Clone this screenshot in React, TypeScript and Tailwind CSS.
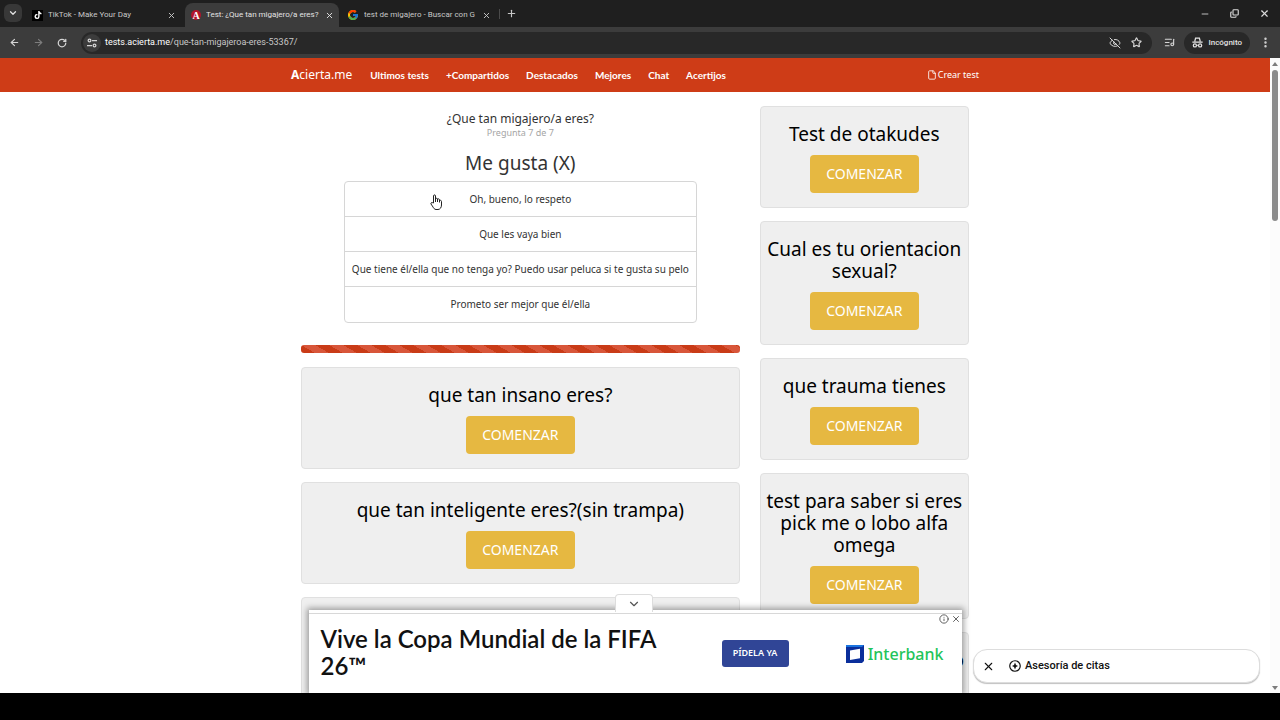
import type { ReactNode } from "react"
import {
  ArrowLeft,
  ArrowRight,
  ChevronDown,
  Copy,
  EyeOff,
  File,
  Info,
  ListMusic,
  Minus,
  MoreVertical,
  Plus,
  RotateCw,
  Star,
  X,
} from "lucide-react"
import { FcGoogle } from "react-icons/fc"
import { FaTiktok } from "react-icons/fa"

const navLinks = ["Ultimos tests", "+Compartidos", "Destacados", "Mejores", "Chat", "Acertijos"]

const answers = [
  "Oh, bueno, lo respeto",
  "Que les vaya bien",
  "Que tiene él/ella que no tenga yo? Puedo usar peluca si te gusta su pelo",
  "Prometo ser mejor que él/ella",
]

const mainTests = ["que tan insano eres?", "que tan inteligente eres?(sin trampa)", ""]

const sideTests = [
  "Test de otakudes",
  "Cual es tu orientacion sexual?",
  "que trauma tienes",
  "test para saber si eres pick me o lobo alfa omega",
  "test de primo perfecto",
]

type TabProps = {
  icon: ReactNode
  title: string
  active?: boolean
}
function Tab({ icon, title, active }: TabProps) {
  return (
    <div
      className={
        active
          ? "flex h-6 w-[154px] items-center gap-[5px] rounded-t-lg bg-[#3c3c3c] pr-[5px] pl-[6px] text-[#e3e3e3]"
          : "flex h-6 w-[156px] items-center gap-[5px] pr-[4px] pl-[8px] text-[#c7c7c7]"
      }
    >
      {icon}
      <span className="min-w-0 flex-1 overflow-hidden text-[8px] whitespace-nowrap">{title}</span>
      <button aria-label="Cerrar pestaña">
        <X className="size-[9px]" strokeWidth={2.5} />
      </button>
    </div>
  )
}

function TabStrip() {
  return (
    <div className="flex h-[27px] items-end bg-[#1f1f1f] font-[Roboto,sans-serif]">
      <button aria-label="Buscar pestañas" className="mb-[5px] ml-1 flex size-[18px] items-center justify-center rounded-md bg-[#383838] text-[#e3e3e3]">
        <ChevronDown className="size-[10px]" strokeWidth={3} />
      </button>
      <div className="ml-[2px] flex">
        <Tab
          title="TikTok - Make Your Day"
          icon={
            <span className="flex size-[11px] items-center justify-center bg-black text-white">
              <FaTiktok className="size-2" />
            </span>
          }
        />
        <div className="ml-[5px]">
          <Tab
            active
            title="Test: ¿Que tan migajero/a eres?"
            icon={
              <span className="flex size-[10px] items-center justify-center rounded-full bg-[#b3142c] font-['Liberation_Serif',serif] text-[10px] font-bold text-white">
                A
              </span>
            }
          />
        </div>
        <Tab title="test de migajero - Buscar con G" icon={<FcGoogle className="size-3 shrink-0" />} />
      </div>
      <div className="mb-2 ml-1 h-[10px] w-px bg-[#4a4a4a]" />
      <button aria-label="Nueva pestaña" className="mb-2 ml-[6px] text-[#c7c7c7]">
        <Plus className="size-[11px]" strokeWidth={2.5} />
      </button>
      <div className="mb-2 ml-auto flex items-center gap-5 pr-[10px] text-[#dcdcdc]">
        <button aria-label="Minimizar">
          <Minus className="size-[10px]" />
        </button>
        <button aria-label="Restaurar">
          <Copy className="size-[9px] -scale-y-100" strokeWidth={3} />
        </button>
        <button aria-label="Cerrar">
          <X className="size-[11px]" strokeWidth={2.5} />
        </button>
      </div>
    </div>
  )
}

function SiteSettingsIcon() {
  return (
    <svg viewBox="0 0 16 16" className="size-[10px]" fill="none" stroke="currentColor" strokeWidth="2">
      <circle cx="4" cy="4" r="2.2" />
      <path d="M8 4h8M0 12h8" />
      <circle cx="12" cy="12" r="2.2" />
    </svg>
  )
}

function IncognitoIcon() {
  return (
    <svg viewBox="0 0 16 16" className="size-[11px]" fill="none" stroke="currentColor" strokeWidth="1.8">
      <path d="M4 6.5 5.2 1.8h5.6L12 6.5M.5 7.6h15M6.6 12h2.8" />
      <circle cx="4.2" cy="12.2" r="2.3" />
      <circle cx="11.8" cy="12.2" r="2.3" />
    </svg>
  )
}

function Toolbar() {
  return (
    <div className="flex h-[31px] items-center bg-[#3c3c3c] font-[Roboto,sans-serif] text-[#d5d5d5]">
      <div className="flex items-center gap-[13px] pl-[9px]">
        <button aria-label="Atrás">
          <ArrowLeft className="size-[11px]" strokeWidth={2.5} />
        </button>
        <button aria-label="Adelante" className="text-[#7d7d7d]">
          <ArrowRight className="size-[11px]" strokeWidth={2.5} />
        </button>
        <button aria-label="Recargar">
          <RotateCw className="size-[10px]" strokeWidth={3} />
        </button>
      </div>
      <div className="ml-[14px] flex h-[22px] flex-1 items-center rounded-full bg-[#282828] pr-[10px] pl-[2px]">
        <button aria-label="Información del sitio" className="flex size-[18px] items-center justify-center rounded-full bg-[#3c3c3c]">
          <SiteSettingsIcon />
        </button>
        <p className="ml-1 flex-1 text-[9px] text-[#c7c7c7]">
          <span className="text-white">tests.acierta.me</span>/que-tan-migajeroa-eres-53367/
        </p>
        <button aria-label="Cookies bloqueadas">
          <EyeOff className="size-[12px]" />
        </button>
        <button aria-label="Guardar en favoritos" className="ml-[10px]">
          <Star className="size-[11px]" strokeWidth={2.5} />
        </button>
      </div>
      <button aria-label="Control multimedia" className="ml-3">
        <ListMusic className="size-[11px]" strokeWidth={2.5} />
      </button>
      <button className="ml-[9px] flex h-[22px] items-center gap-[5px] rounded-full bg-[#282828] px-2 text-[8px] font-medium text-[#e3e3e3]">
        <IncognitoIcon />
        Incógnito
      </button>
      <button aria-label="Menú" className="mr-2 ml-[9px]">
        <MoreVertical className="size-[13px]" strokeWidth={2.5} />
      </button>
    </div>
  )
}

function Navbar() {
  return (
    <header className="bg-[#ce3c17] text-white">
      <div className="mx-auto flex h-[34px] max-w-[688px] items-center">
        <a href="#" className="text-[12px]">
          <b>A</b>cierta.me
        </a>
        <nav className="ml-[18px] flex gap-[17px] font-[Lato,sans-serif] text-[10px] font-bold">
          {navLinks.map((link) => (
            <a key={link} href="#">
              {link}
            </a>
          ))}
        </nav>
        <a href="#" className="ml-auto flex items-center gap-px text-[9px]">
          <File className="size-[10px]" />
          Crear test
        </a>
      </div>
    </header>
  )
}

function TestCard({ title }: { title: string }) {
  return (
    <article className="flex min-h-[102px] flex-col items-center rounded border border-[#e0e0e0] bg-[#efefef] pt-4 pb-[14px] text-center">
      <h3 className="text-[19px] leading-[22px] text-black">{title}</h3>
      {title && (
        <a href="#" className="mt-[10px] flex h-[38px] w-[109px] items-center justify-center rounded bg-[#e6b841] pb-px text-[14px] text-white">
          COMENZAR
        </a>
      )}
    </article>
  )
}

function Question() {
  return (
    <section className="text-center text-[#333]">
      <h1 className="pt-1 text-[12px] leading-[18px]">¿Que tan migajero/a eres?</h1>
      <p className="text-[9px] leading-[10px] text-[#a5a5a5]">Pregunta 7 de 7</p>
      <h2 className="mt-[14px] text-[19px] leading-[22px]">Me gusta (X)</h2>
      <div className="mx-[43px] mt-[7px] flex flex-col divide-y divide-[#d6d6d6] rounded border border-[#d6d6d6]">
        {answers.map((answer) => (
          <button key={answer} className="h-[35px] cursor-pointer text-[10px] whitespace-nowrap">
            {answer}
          </button>
        ))}
      </div>
    </section>
  )
}

function HandCursor() {
  return (
    <svg viewBox="0 0 24 32" className="absolute top-[136px] left-[430px] h-4 w-3" fill="#fff" stroke="#222" strokeWidth="2" strokeLinejoin="round">
      <path d="M7 18V4c0-3 4-3 4 0v8-2c0-2 4-2 4 0v3-2c0-2 4-2 4 1v2c0-2 4-2 4 1v7c0 5-3 9-7 9h-4c-3 0-5-3-6-5l-4-6c-1-3 2-4 4-2z" />
      <path d="M11 11v5M15 12v4M19 13v4" />
    </svg>
  )
}

function AdBanner() {
  return (
    <aside className="absolute inset-x-0 bottom-0 mx-auto w-[653px]">
      <button
        aria-label="Ocultar anuncio"
        className="absolute -top-[16px] left-[306px] flex h-[18px] w-[38px] items-center justify-center rounded-t border border-b-0 border-[#ddd] bg-white text-[#555]"
      >
        <ChevronDown className="size-[14px]" />
      </button>
      <div className="h-[83px] bg-white pt-[3px] shadow-[0_0_6px_2px_rgba(0,0,0,0.35)]">
        <div className="relative flex h-full items-center border-t border-[#d8d8d8] pr-[18px] pl-3">
          <p className="w-[360px] pb-1 font-[Lato,sans-serif] text-[24px] leading-[27px] font-semibold text-[#111]">
            Vive la Copa Mundial de la FIFA 26™
          </p>
          <a href="#" className="ml-[41px] flex h-[27px] w-[67px] items-center justify-center rounded-[3px] bg-[#304596] pb-px text-[9px] font-semibold text-white">
            PÍDELA YA
          </a>
          <div className="ml-auto flex items-center gap-1">
            <svg viewBox="0 0 18 18" className="size-[18px]">
              <path d="M0 0h18v16l-2 2H0z" fill="#0a2e9b" />
              <path d="M0 0h18l-2 2H0z" fill="#1a74e0" />
              <path d="m4 5.5 10-1.7v9.4L4 15z" fill="#fff" />
            </svg>
            <span className="text-[16px] font-medium text-[#1fc45a]">Interbank</span>
          </div>
          <div className="absolute top-0 right-px flex gap-[2px] text-[#444]">
            <Info className="size-[10px]" />
            <X className="size-[10px]" />
          </div>
        </div>
      </div>
    </aside>
  )
}

function SearchChip() {
  return (
    <aside className="absolute right-[10px] bottom-[10px] flex h-[34px] w-[287px] items-center rounded-[14px] border border-[#ddd] bg-white pl-2 font-[Roboto,sans-serif] text-[#111] shadow-[0_1px_1px_rgba(0,0,0,0.25)]">
      <button aria-label="Cerrar sugerencia">
        <X className="size-[13px]" />
      </button>
      <a href="#" className="ml-[14px] flex items-center gap-1 text-[11px] font-medium">
        <svg viewBox="0 0 24 24" className="size-3" fill="none" stroke="currentColor" strokeWidth="2.4">
          <circle cx="12" cy="12" r="10.5" />
          <path d="m12 5 2 5 4 2-4 2-2 5-2-5-4-2 4-2z" fill="currentColor" stroke="none" />
        </svg>
        Asesoría de citas
      </a>
    </aside>
  )
}

function Scrollbar() {
  return (
    <div className="flex w-[10px] flex-col items-center bg-[#fcfcfc] pt-1 pb-[3px]">
      <svg viewBox="0 0 6 4" className="h-1 w-[6px]" fill="#7d7d7d">
        <path d="M3 0l3 4H0z" />
      </svg>
      <div className="mt-1 h-[151px] w-[6px] rounded-full bg-[#8b8b8b]" />
      <svg viewBox="0 0 6 4" className="mt-auto h-1 w-[6px]" fill="#7d7d7d">
        <path d="M0 0h6L3 4z" />
      </svg>
    </div>
  )
}

export default function App() {
  return (
    <div className="flex h-screen flex-col overflow-hidden bg-white font-['Noto_Sans',sans-serif]">
      <TabStrip />
      <Toolbar />
      <div className="flex min-h-0 flex-1">
        <div className="relative min-w-0 flex-1 overflow-hidden">
          <Navbar />
          <main className="mx-auto grid max-w-[688px] grid-cols-3 pt-[14px]">
            <div className="col-span-2 px-[10px]">
              <Question />
              <div className="mt-[22px] mb-[14px] h-2 rounded-[3px] bg-[repeating-linear-gradient(30deg,#c93b17_0px,#c93b17_7px,#d8563a_7px,#d8563a_14px)]" />
              <div className="flex flex-col gap-[13px]">
                {mainTests.map((title, i) => (
                  <TestCard key={i} title={title} />
                ))}
              </div>
            </div>
            <div className="flex flex-col gap-[13px] px-[10px]">
              {sideTests.map((title) => (
                <TestCard key={title} title={title} />
              ))}
            </div>
          </main>
          <HandCursor />
          <AdBanner />
          <SearchChip />
        </div>
        <Scrollbar />
      </div>
      <div className="h-[27px] shrink-0 bg-black" />
    </div>
  )
}
